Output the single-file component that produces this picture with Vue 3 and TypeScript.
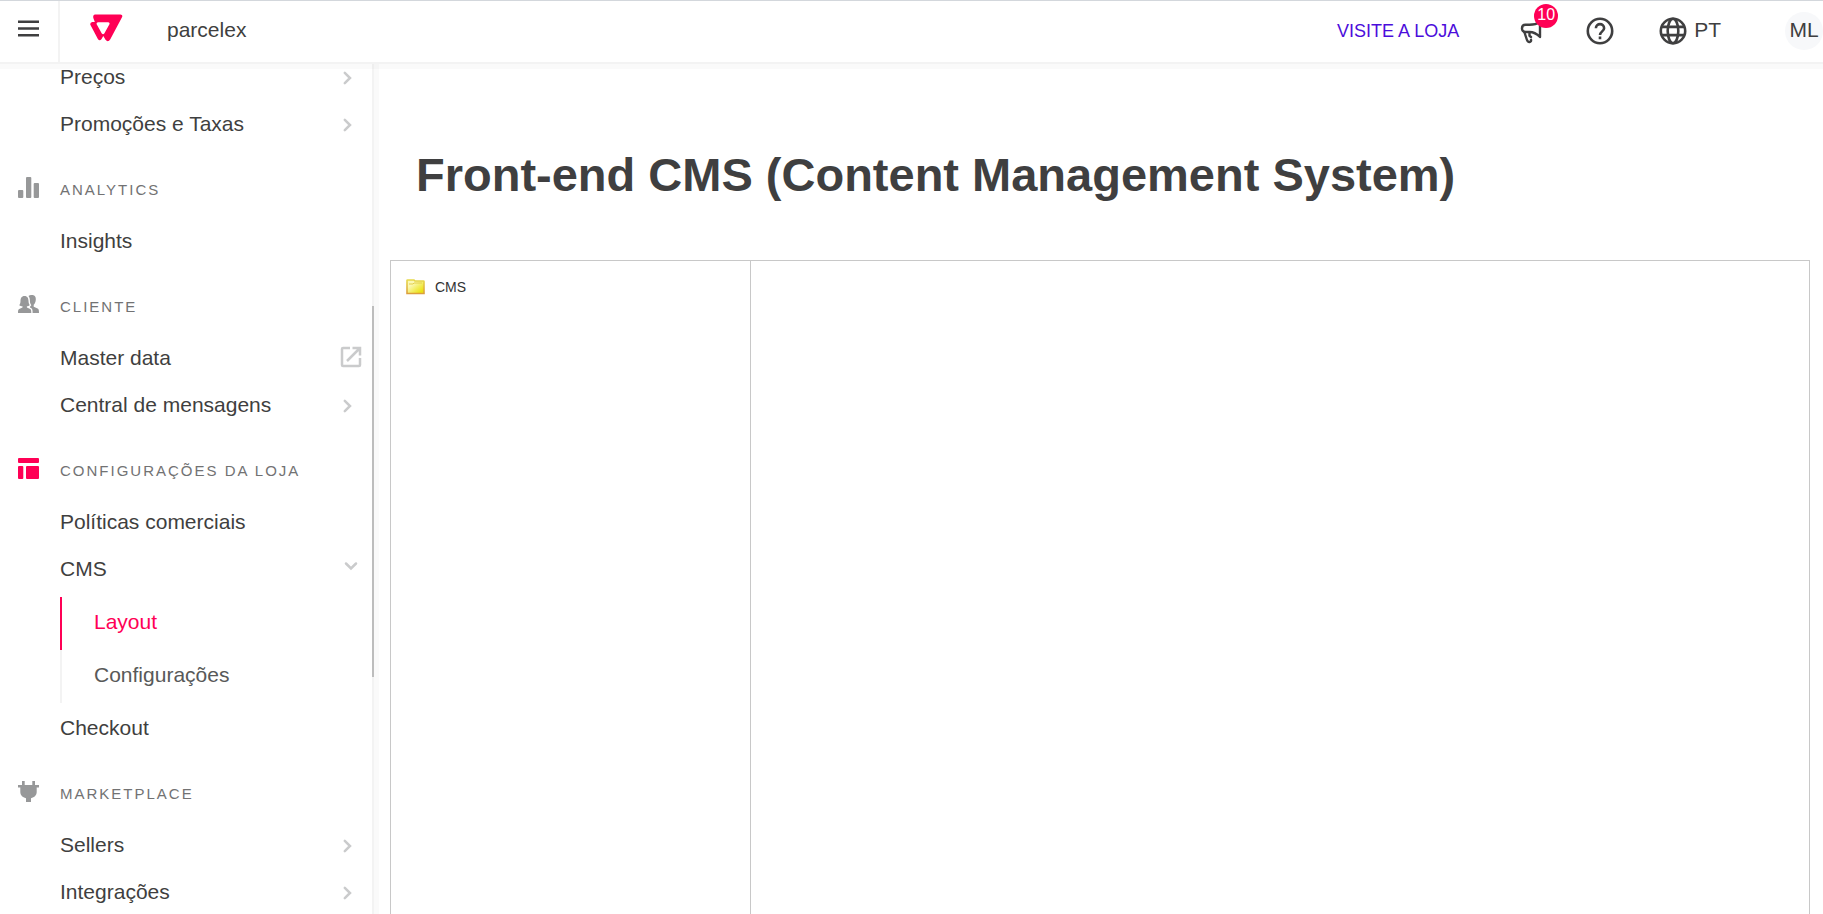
<script setup lang="ts">
import { onMounted, ref } from 'vue'

type Trail = 'right' | 'down' | 'external'
type SectionIcon = 'bars' | 'people' | 'layout' | 'plug'

interface NavItem {
  label: string
  trail?: Trail
  children?: { label: string; active?: boolean }[]
}

interface NavSection {
  title?: string
  icon?: SectionIcon
  active?: boolean
  items: NavItem[]
}

const sections: NavSection[] = [
  {
    items: [
      { label: 'Preços', trail: 'right' },
      { label: 'Promoções e Taxas', trail: 'right' },
    ],
  },
  { title: 'Analytics', icon: 'bars', items: [{ label: 'Insights' }] },
  {
    title: 'Cliente',
    icon: 'people',
    items: [
      { label: 'Master data', trail: 'external' },
      { label: 'Central de mensagens', trail: 'right' },
    ],
  },
  {
    title: 'Configurações da loja',
    icon: 'layout',
    active: true,
    items: [
      { label: 'Políticas comerciais' },
      {
        label: 'CMS',
        trail: 'down',
        children: [{ label: 'Layout', active: true }, { label: 'Configurações' }],
      },
      { label: 'Checkout' },
    ],
  },
  {
    title: 'Marketplace',
    icon: 'plug',
    items: [
      { label: 'Sellers', trail: 'right' },
      { label: 'Integrações', trail: 'right' },
    ],
  },
]

const scroller = ref<HTMLElement | null>(null)

// The menu opens slightly scrolled, with its first row under the top bar.
onMounted(() => {
  if (scroller.value) scroller.value.scrollTop = 11
})
</script>

<template>
  <div class="app">
    <header class="topbar">
      <button class="menu-button" type="button" aria-label="Menu">
        <svg width="21" height="17" viewBox="0 0 21 17" aria-hidden="true">
          <path d="M0 1.8h21M0 8.5h21M0 15.2h21" stroke="#3f3f40" stroke-width="2.6" />
        </svg>
      </button>
      <a class="brand" href="#" aria-label="VTEX">
        <svg width="33" height="28" viewBox="0 0 33 28" aria-hidden="true">
          <path
            class="brand-shape"
            fill-rule="evenodd"
            d="M4.800 .5H30.500Q33.200 .700 32 3.200L20.300 25.300Q18 28.800 15.500 25.800L13.300 22L11.400 25.200Q9.700 27.200 8 25.200L.600 11.300Q-.600 8.600 2.300 8H4.800L3.500 4.600Q2.400 1.200 4.800 .5ZM8 8.300H18.300Q20.200 8.700 19.300 10.500L14.300 19.600Q13 21 11.800 19.600L6.800 10.500Q6 8.600 8 8.300Z"
          />
        </svg>
      </a>
      <span class="account">parcelex</span>
      <div class="actions">
        <a class="store-link" href="#">VISITE A LOJA</a>
        <button class="news" type="button" aria-label="Novidades">
          <svg width="22" height="26" viewBox="0 0 22 26" fill="none" stroke="#3f3f40" stroke-width="2.4" stroke-linejoin="round" stroke-linecap="round" aria-hidden="true">
            <path d="M20 4V19C17 16 14 14 9.500 14H5.500C.800 14 .800 6.800 5.500 6.800H9.500C14 6.800 17 6 20 4Z" />
            <path d="M4.500 14.500L6.800 21.500C8 25.300 11.700 24.300 11 21.800M9.500 14.500V17.800L11 19" />
          </svg>
          <span class="badge">10</span>
        </button>
        <button class="help" type="button" aria-label="Ajuda">
          <svg width="28" height="28" viewBox="0 0 28 28" fill="none" stroke="#3f3f40" stroke-width="2.6" aria-hidden="true">
            <circle cx="14" cy="14" r="12.200" />
            <path d="M9.900 11.200C9.900 5.800 18.100 5.800 18.100 11.200C18.100 14.300 14 14.500 14 18.100M14 19.500V22.200" />
          </svg>
        </button>
        <button class="language" type="button">
          <svg width="28" height="28" viewBox="0 0 28 28" fill="none" stroke="#3f3f40" stroke-width="2.6" aria-hidden="true">
            <circle cx="14" cy="14" r="12.200" />
            <ellipse cx="14" cy="14" rx="5.300" ry="12.200" />
            <path d="M2.500 9.900H25.500M2.500 18.100H25.500" />
          </svg>
          <span class="label">PT</span>
        </button>
        <button class="avatar" type="button"><span class="label">ML</span></button>
      </div>
    </header>

    <div class="body">
      <aside class="sidebar">
        <nav ref="scroller" class="nav" aria-label="Menu principal">
          <section v-for="(section, i) in sections" :key="i">
            <h2 v-if="section.title" class="section-title">
              <svg class="section-icon" :class="{ active: section.active }" width="21" height="21" viewBox="0 0 21 21" aria-hidden="true">
                <template v-if="section.icon === 'bars'">
                  <rect x="0" y="13" width="5.300" height="8" rx="1" />
                  <rect x="8" y="0" width="5.300" height="21" rx="1" />
                  <rect x="15.700" y="6" width="5.300" height="15" rx="1" />
                </template>
                <template v-else-if="section.icon === 'people'">
                  <path d="M6.500 2C9.600 2 10.500 4.500 10.500 7C10.500 9 11.200 10 11.700 11.200C10.800 12 9.700 12.200 8.900 12.200V13.400L12.200 15C13.100 15.600 13.300 16.500 13.300 19H0C0 16.500 .200 15.600 1.200 15L4.500 13.400V12.200C3.300 12.200 2.200 12 1.300 11.200C2 10 2.500 9 2.500 7C2.500 4.500 3.400 2 6.500 2Z" />
                  <path d="M14 1C17 1 18 3.200 17.800 5.700C17.600 8 16.800 9.800 15.700 10.800V12.700L19.600 14.500C20.800 15.200 21 16 21 19H14.600C14.600 16.500 14.500 15.200 13.400 14.300L12 13.400V12.800L13.300 11.300C12.200 9.500 11.900 8.500 11.900 6.800C11.900 4.600 11.500 3.200 10.500 2C11.300 1.300 12.500 1 14 1Z" />
                </template>
                <template v-else-if="section.icon === 'layout'">
                  <rect x="0" y="0" width="21" height="5" rx="1" />
                  <rect x="0" y="8" width="5.300" height="13" rx="1" />
                  <rect x="8" y="8" width="13" height="13" rx="1" />
                </template>
                <path v-else d="M4 0H6.700V4H14.300V0H17V4H21V6.500H18.700V11C18.700 14 16.500 16.500 13 17.200V21H8V17.200C4.500 16.500 2.300 14 2.300 11V6.500H0V4H4Z" />
              </svg>
              {{ section.title }}
            </h2>
            <ul class="list">
              <li v-for="item in section.items" :key="item.label">
                <a class="item" href="#">
                  {{ item.label }}
                  <svg v-if="item.trail" class="trail" width="23" height="23" viewBox="0 0 23 23" aria-hidden="true">
                    <path v-if="item.trail === 'right'" d="M4.800 7.800L10 13L4.800 18.200" />
                    <path v-else-if="item.trail === 'down'" d="M6 6.500L11 11.500L16 6.500" />
                    <path v-else stroke-linecap="butt" d="M10 2H3Q2 2 2 3V19Q2 20 3 20H19Q20 20 20 19V12M12.500 2H20V9.500M20 2L7 15" />
                  </svg>
                </a>
                <ul v-if="item.children" class="list sublist">
                  <li v-for="child in item.children" :key="child.label">
                    <a class="subitem" :class="{ active: child.active }" href="#">{{ child.label }}</a>
                  </li>
                </ul>
              </li>
            </ul>
          </section>
        </nav>
        <span class="thumb"></span>
      </aside>

      <main class="content">
        <h1 class="heading">Front-end CMS (Content Management System)</h1>
        <div class="panel">
          <div class="tree">
            <a class="folder" href="#">
              <svg width="19" height="16" viewBox="0 0 19 16" aria-hidden="true">
                <defs>
                  <linearGradient id="folder-fill" x1="0" y1="0" x2="1" y2="1">
                    <stop offset="0.3" stop-color="#fbf8b4" />
                    <stop offset="0.85" stop-color="#ebe312" />
                  </linearGradient>
                  <linearGradient id="folder-edge" x1="0" y1="0" x2="0" y2="1">
                    <stop offset="0" stop-color="#e6d94a" />
                    <stop offset="1" stop-color="#dc9f3c" />
                  </linearGradient>
                </defs>
                <path d="M1 1.500Q1 1 1.500 1H8L9 2H17.500Q18 2 18 2.500V14.500H1Z" fill="url(#folder-fill)" stroke="url(#folder-edge)" stroke-width="1.6" />
                <path d="M3 5H7L8 4H16" fill="none" stroke="#e3cf4a" />
              </svg>
              CMS
            </a>
          </div>
          <div class="detail"></div>
        </div>
      </main>
    </div>
  </div>
</template>

<style>
body {
  margin: 0;
}
</style>

<style scoped>
.app {
  box-sizing: border-box;
  display: flex;
  flex-direction: column;
  height: 100vh;
  overflow: hidden;
  background: #fff;
  color: #3f3f40;
  font-family: 'Liberation Sans', Arial, sans-serif;
  font-size: 21px;
}

button {
  padding: 0;
  border: 0;
  background: none;
  color: inherit;
  font: inherit;
  cursor: pointer;
}

a {
  color: inherit;
  text-decoration: none;
}

svg {
  display: block;
  flex: none;
}

.topbar {
  box-sizing: border-box;
  position: relative;
  z-index: 1;
  display: flex;
  flex: none;
  align-items: stretch;
  height: 64px;
  border-top: 1px solid #d3d7dc;
  border-bottom: 2px solid #f3f3f3;
  background: #fff;
  box-shadow: 0 5px 0 rgba(0, 0, 0, 0.02);
}

.menu-button {
  display: flex;
  justify-content: center;
  box-sizing: border-box;
  width: 60px;
  padding-top: 19px;
  padding-right: 1px;
  border-right: 2px solid #f3f3f3;
}

.brand {
  padding: 13px 44px 0 30px;
}

.brand-shape {
  fill: #ff0055;
}

.account {
  line-height: 58px;
}

.actions {
  display: flex;
  align-items: center;
  margin-left: auto;
  padding-bottom: 1px;
}

.store-link {
  margin-right: 61px;
  color: #4b0ddb;
  font-size: 18px;
}

.news {
  position: relative;
  margin-right: 44px;
}

.badge {
  position: absolute;
  top: -14px;
  left: 14px;
  width: 24px;
  height: 24px;
  border-radius: 50%;
  background: #ff0055;
  color: #fff;
  font-size: 16px;
  line-height: 22px;
  text-align: center;
}

.help {
  margin-right: 45px;
}

.language {
  display: flex;
  align-items: center;
  gap: 7px;
  margin-right: 64px;
}

.avatar {
  width: 38px;
  height: 38px;
  border-radius: 50%;
  background: #f7f8fa;
}

.label {
  display: block;
  padding-bottom: 2px;
}

.body {
  display: flex;
  flex: 1;
  min-height: 0;
}

.sidebar {
  position: relative;
  box-sizing: border-box;
  flex: none;
  width: 374px;
  border-right: 2px solid #f3f3f3;
  box-shadow: 5px 0 0 #fafafa;
}

.nav {
  height: 100%;
  overflow-y: auto;
  scrollbar-width: none;
}

.thumb {
  position: absolute;
  top: 28.5%;
  right: -2px;
  width: 2px;
  height: 43.6%;
  background: #bdbdbd;
}

.list {
  margin: 0;
  padding: 0;
  list-style: none;
}

.section-title {
  display: flex;
  gap: 21px;
  margin: 0;
  padding: 30px 9px 14px 18px;
  color: #727273;
  font-size: 15px;
  font-weight: 400;
  line-height: 26px;
  letter-spacing: 2px;
  text-transform: uppercase;
}

.section-icon {
  fill: #979899;
}

.section-icon.active {
  fill: #ff0055;
}

.item {
  display: flex;
  align-items: center;
  justify-content: space-between;
  padding: 0 9px 0 60px;
  line-height: 47px;
}

.trail {
  fill: none;
  stroke: #cacbcc;
  stroke-width: 2.5;
  stroke-linecap: round;
}

.sublist {
  margin: 5px 0 1px 60px;
}

.subitem {
  display: block;
  padding: 0 0 4px 32px;
  border-left: 2px solid #f3f3f3;
  color: #585959;
  line-height: 49px;
}

.subitem.active {
  border-color: #ff0055;
  color: #ff0055;
}

.content {
  display: flex;
  flex: 1;
  flex-direction: column;
  min-width: 0;
  padding: 0 13px 0 16px;
}

.heading {
  margin: 0;
  padding: 80px 26px 54px;
  font-size: 47px;
  line-height: 62px;
}

.panel {
  display: flex;
  flex: 1;
  border: 1px solid #c8c8c8;
  border-bottom: 0;
}

.tree {
  flex: none;
  box-sizing: border-box;
  width: 360px;
  padding: 15px;
  border-right: 1px solid #c8c8c8;
}

.folder {
  display: inline-flex;
  align-items: center;
  gap: 10px;
  color: #333;
  font-size: 14px;
  line-height: 20px;
}

.detail {
  flex: 1;
}
</style>
